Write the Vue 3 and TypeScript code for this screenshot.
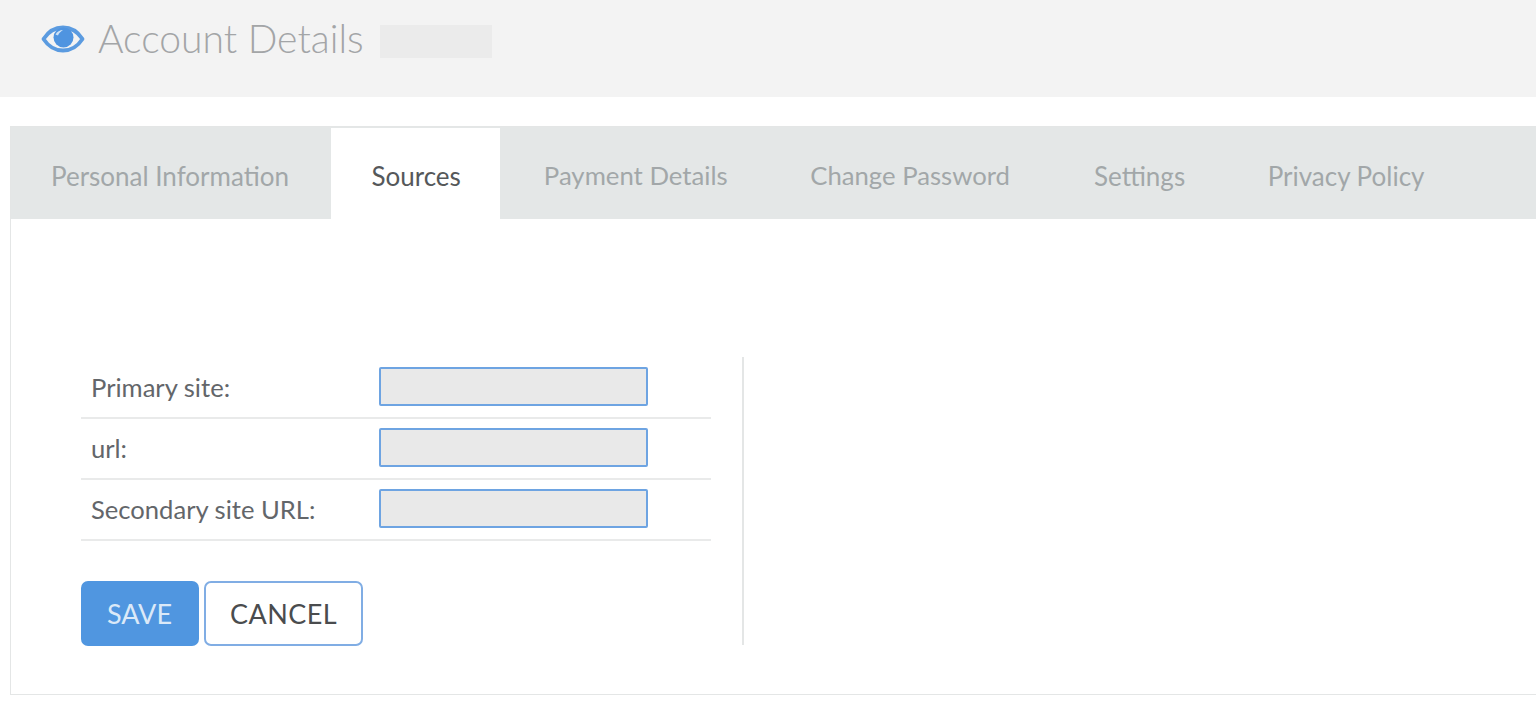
<script setup lang="ts">
const tabs: string[] = ['Personal Information', 'Sources', 'Payment Details', 'Change Password', 'Settings', 'Privacy Policy']
const fields: string[] = ['Primary site:', 'url:', 'Secondary site URL:']
</script>

<template>
  <div class="page">
    <header class="head">
      <svg class="eye" width="44" height="30" viewBox="0 0 44 30" aria-hidden="true">
        <path d="M2.5 15 C8 6.5 15 3.5 22 3.5 C29 3.5 36 6.5 41.5 15 C36 23.5 29 26.5 22 26.5 C15 26.5 8 23.5 2.5 15 Z" fill="none" stroke="#5b9be0" stroke-width="3.8" stroke-linejoin="round" />
        <circle cx="22.5" cy="13.5" r="10" fill="#4f94e0" />
        <path d="M14.5 10.5 C16 7.5 19 6 22 6 C19.5 7.5 18 9 17 11.5 Z" fill="#cfe2f6" />
      </svg>
      <h1 class="title">Account Details</h1>
      <div class="redact"></div>
    </header>
    <section class="card">
      <nav class="tabs">
        <div v-for="t in tabs" :key="t" class="tab" :class="{ active: t === 'Sources' }">{{ t }}</div>
      </nav>
      <div class="body">
        <div class="formcol">
          <div v-for="f in fields" :key="f" class="row">
            <span class="label">{{ f }}</span>
            <div class="input"></div>
          </div>
          <div class="actions">
            <button class="btn save">SAVE</button>
            <button class="btn cancel">CANCEL</button>
          </div>
        </div>
      </div>
    </section>
  </div>
</template>

<style>
html, body { background: #fff; overflow: hidden; }
</style>

<style scoped>
.page { width: 1536px; height: 701px; overflow: hidden; font-family: Lato, "Liberation Sans", sans-serif; background: #fff; }
.head { height: 97px; background: #f3f3f3; display: flex; align-items: flex-start; padding-left: 41px; box-sizing: border-box; }
.eye { margin-top: 24px; }
.title { margin: 15px 0 0 13px; font-size: 39.1px; line-height: 46px; font-weight: 300; color: #a3a5a7; }
.redact { width: 112px; height: 33px; margin: 25px 0 0 16px; background: #ebebeb; }
.card { margin: 29px 0 0 10px; height: 569px; border: 1px solid #e4e6e6; border-right: 0; box-sizing: border-box; }
.tabs { height: 92px; display: flex; background: #e4e7e7; }
.tab { padding: 0 41px 0 42px; line-height: 98px; font-size: 26px; color: #a2a7a9; white-space: nowrap; height: 92px; box-sizing: border-box; }
.tab:nth-child(1) { padding: 0 42px 0 40px; }
.tab:nth-child(3) { padding: 0 41px 0 43.5px; font-size: 25.75px; line-height: 96px; }
.tab:nth-child(4) { padding-left: 41.5px; font-size: 25.7px; line-height: 96px; }
.tab:nth-child(5) { padding-left: 43px; }
.tab:nth-child(6) { padding-left: 41.5px; }
.tab.active { background: #fff; color: #55585a; margin-top: 1px; line-height: 97px; height: 91px; padding: 0 39.5px 0 40.5px; }
.body { padding: 138px 0 0 70px; }
.formcol { width: 663px; height: 288px; border-right: 2px solid #e4e6e6; box-sizing: border-box; padding: 1px 31px 0 0; }
.row { height: 61px; display: flex; align-items: center; border-bottom: 2px solid #e9eaea; box-sizing: border-box; padding: 0 0 0 10px; }
.label { width: 288px; font-size: 25.6px; color: #63666a; margin-top: -2px; }
.input { width: 269px; height: 39px; box-sizing: border-box; background: #e9e9e9; border: 2px solid #6ea4e2; border-radius: 2px; margin-top: -3px; }
.actions { display: flex; gap: 5px; margin-top: 40px; }
.btn { height: 65px; font-family: inherit; font-size: 27px; border-radius: 7px; box-sizing: border-box; padding: 0; }
.save { width: 118px; background: #5096e0; border: 0; color: #dbe9f8; padding-right: 1px; }
.cancel { width: 159px; background: #fff; border: 2px solid #80ade4; color: #4a4c4e; letter-spacing: 0.4px; }
</style>
